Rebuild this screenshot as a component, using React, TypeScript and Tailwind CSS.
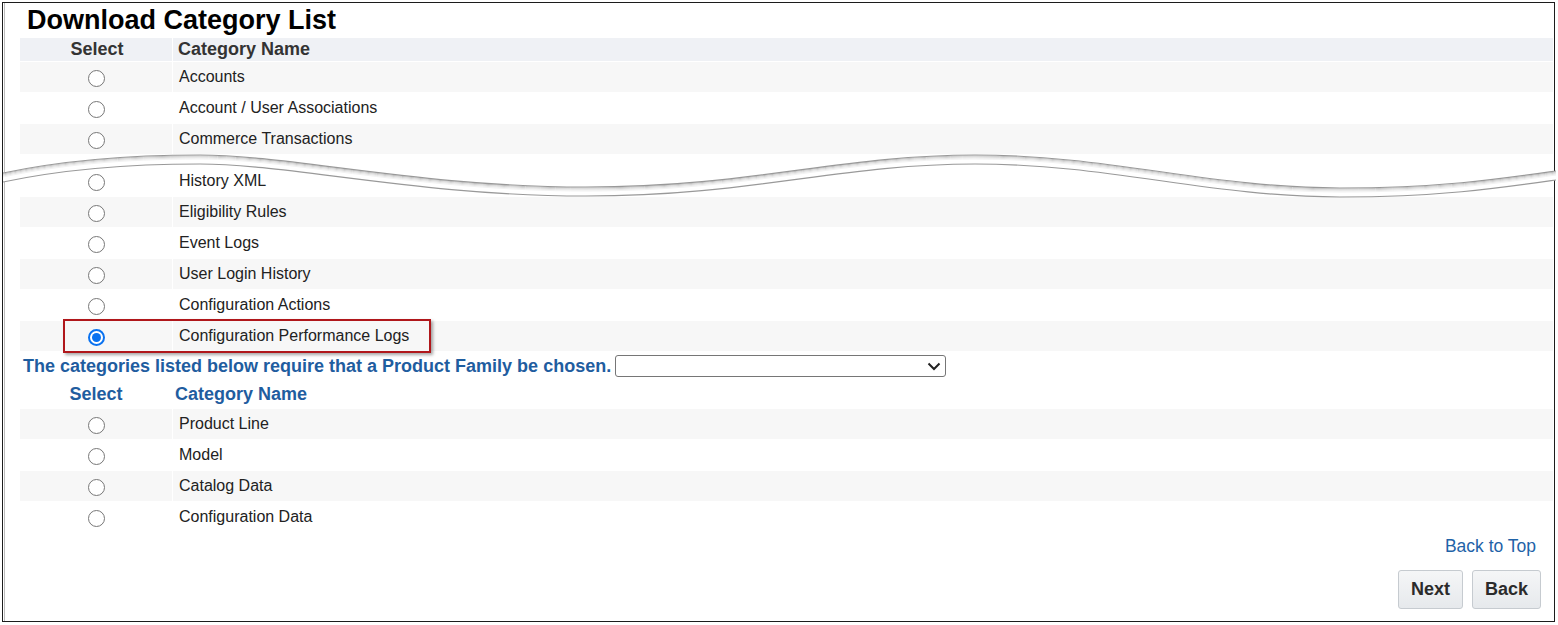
import React from "react";

const topRows = ["Accounts", "Account / User Associations", "Commerce Transactions"];
const midRows = [
  "History XML",
  "Eligibility Rules",
  "Event Logs",
  "User Login History",
  "Configuration Actions",
  "Configuration Performance Logs",
];
const familyRows = ["Product Line", "Model", "Catalog Data", "Configuration Data"];

const WAVE =
  "M3 173 C 60 161, 120 155, 200 155 C 290 155, 420 187, 586 187 C 750 187, 840 155, 975 155 C 1110 155, 1210 188, 1340 188 C 1440 188, 1500 179, 1556 171";

function Radio({ checked = false }: { checked?: boolean }) {
  if (checked) {
    return (
      <span className="mt-[3px] w-[17px] h-[17px] rounded-full border-2 border-[#0a72f0] bg-white flex items-center justify-center">
        <span className="w-[9px] h-[9px] rounded-full bg-[#0a72f0]" />
      </span>
    );
  }
  return <span className="mt-[3px] w-[17px] h-[17px] rounded-full border-[1.3px] border-[#777] bg-white" />;
}

function Row({
  label,
  shade,
  checked,
  marked,
}: {
  label: string;
  shade: boolean;
  checked?: boolean;
  marked?: boolean;
}) {
  const bg = shade ? "bg-[#f7f7f7]" : "bg-white";
  return (
    <div className="relative grid grid-cols-[152px_1fr] gap-x-[1px] h-[30px]">
      <div className={`${bg} flex items-center justify-center pl-[1px]`}>
        <Radio checked={checked} />
      </div>
      <div className={`${bg} flex items-center pl-[6px] text-[16px] text-[#222]`}>{label}</div>
      {marked && (
        <div className="absolute left-[43px] top-[-2px] w-[368px] h-[34px] border-2 border-[#b0171b] shadow-[2px_2px_3px_rgba(0,0,0,0.35)]" />
      )}
    </div>
  );
}

function Wave() {
  return (
    <svg
      className="absolute left-[-17px] top-[-5px] w-[1553px] h-[55px]"
      viewBox="3 150 1553 55"
      fill="none"
    >
      <path d={WAVE} stroke="#ffffff" strokeWidth="9" transform="translate(0 4.5)" />
      <path d={WAVE} stroke="#c4c4c4" strokeWidth="1" transform="translate(0 1)" />
      <path d={WAVE} stroke="#d6d6d6" strokeWidth="1" transform="translate(0 2)" />
      <path d={WAVE} stroke="#e6e6e6" strokeWidth="1" transform="translate(0 3)" />
      <path d={WAVE} stroke="#f2f2f2" strokeWidth="1" transform="translate(0 4)" />
      <path d={WAVE} stroke="#999" strokeWidth="1.2" />
      <path d={WAVE} stroke="#999" strokeWidth="1.2" transform="translate(0 9)" />
    </svg>
  );
}

export default function App() {
  return (
    <div className="w-[1558px] h-[625px] bg-white overflow-hidden font-['Liberation_Sans',Arial,sans-serif]">
      <div className="ml-[2px] mt-[2px] w-[1553px] h-[620px] border border-[#1c1c1c] shadow-[inset_1px_0_0_#fff,inset_2px_0_0_#bdbdbd] pl-[17px] pr-[1px] flex flex-col">
        <h1 className="ml-[7px] h-[35px] leading-[35px] text-[27px] font-bold text-black">
          Download Category List
        </h1>

        <div className="flex flex-col gap-y-[1px]">
          <div className="grid grid-cols-[152px_1fr] gap-x-[1px] h-[23px] leading-[21px] text-[18px] font-bold text-[#333]">
            <div className="bg-[#eff1f5] flex items-center justify-center pl-[2px]">Select</div>
            <div className="bg-[#eff1f5] flex items-center pl-[5px]">Category Name</div>
          </div>
          {topRows.map((label, i) => (
            <Row key={label} label={label} shade={i % 2 === 0} />
          ))}
          <div className="relative z-10 h-[10px]">
            <Wave />
          </div>
          {midRows.map((label, i) => (
            <Row
              key={label}
              label={label}
              shade={i % 2 === 1}
              checked={i === midRows.length - 1}
              marked={i === midRows.length - 1}
            />
          ))}
        </div>

        <div className="h-[29px] flex items-center ml-[3px] gap-[4px] pt-[1px]">
          <span className="text-[18px] font-bold text-[#1f5d9f]">
            The categories listed below require that a Product Family be chosen.
          </span>
          <div className="w-[331px] h-[22px] border border-[#767676] rounded-[3px] bg-white flex items-center justify-end pr-[4px]">
            <svg width="14" height="9" viewBox="0 0 14 9" fill="none">
              <path d="M1.5 1.5 L7 7 L12.5 1.5" stroke="#222" strokeWidth="2" />
            </svg>
          </div>
        </div>

        <div className="grid grid-cols-[152px_1fr] gap-x-[1px] h-[29px] text-[18px] font-bold text-[#1f5d9f]">
          <div className="flex items-center justify-center">Select</div>
          <div className="flex items-center pl-[2px]">Category Name</div>
        </div>

        <div className="flex flex-col gap-y-[1px]">
          {familyRows.map((label, i) => (
            <Row key={label} label={label} shade={i % 2 === 0} />
          ))}
        </div>

        <div className="h-[29px] flex items-center justify-end pr-[17px]">
          <a className="text-[17.5px] text-[#1f63a8] cursor-pointer">Back to Top</a>
        </div>

        <div className="mt-[9px] flex justify-end gap-[9px] pr-[12px]">
          <button className="h-[39px] px-[12px] rounded-[3px] border border-[#c6cbd0] bg-gradient-to-b from-[#f5f6f7] to-[#e6e9ec] text-[18px] font-bold text-[#2b2b2b]">
            Next
          </button>
          <button className="h-[39px] px-[12px] rounded-[3px] border border-[#c6cbd0] bg-gradient-to-b from-[#f5f6f7] to-[#e6e9ec] text-[18px] font-bold text-[#2b2b2b]">
            Back
          </button>
        </div>
      </div>
    </div>
  );
}
